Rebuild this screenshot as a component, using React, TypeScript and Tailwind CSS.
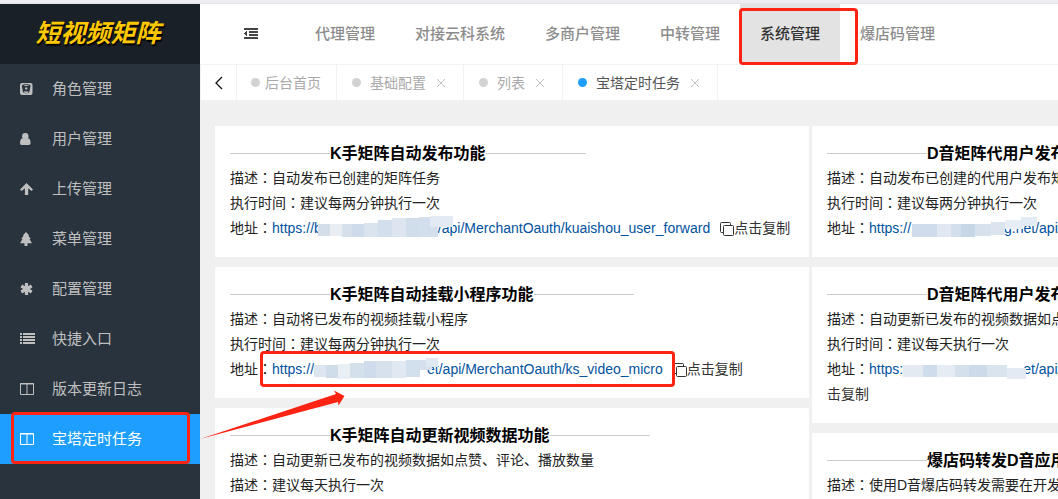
import type { ReactNode } from "react"

interface Patch {
  x: number
  y: number
  w: number
  h: number
  fill: string
}

interface Task {
  title: string
  rows: [string, string][]
  url?: { start: string; end: string; gap: string; patches: Patch[]; boxed?: boolean }
}

const RED = "border-[#ff2314]"

function BucketIcon() {
  return (
    <svg width="14" height="14" viewBox="0 0 14 14">
      <rect x="0" y="1" width="12.5" height="12" rx="2" fill="currentColor" />
      <path d="M1.800 3.500c1-1.700 7.800-1.700 8.800 0L9.400 10c-.8 1.800-5.600 1.800-6.400 0z" fill="#28333e" />
      <path d="M3.200 3.500c1.500-.8 4.500-.8 6 0-1.500.7-4.500.7-6 0zM4 9c1.200.8 3.200.8 4.400 0l-.3 1.400c-1 .7-2.800.7-3.800 0z" fill="currentColor" />
      <circle cx="6.200" cy="6.400" r="1.200" fill="currentColor" />
    </svg>
  )
}

function UserIcon() {
  return (
    <svg width="14" height="14" viewBox="0 0 14 14" fill="currentColor">
      <circle cx="5.300" cy="4.200" r="3.200" />
      <path d="M0 11c0-3 1-4.600 3-4.700 1.300 1.200 3.300 1.200 4.600 0 2 .1 3 1.700 3 4.700 0 1.300-.7 2-1.700 2H1.700C.7 13 0 12.300 0 11z" />
    </svg>
  )
}

function ArrowUpIcon() {
  return (
    <svg width="14" height="14" viewBox="0 0 14 14" fill="currentColor">
      <path d="M6.500 1 13 7.400l-1.500 1.500L8.200 6.200V13H4.900V6.200L1.600 8.900 0 7.400z" />
    </svg>
  )
}

function TreeIcon() {
  return (
    <svg width="14" height="14" viewBox="0 0 14 14" fill="currentColor">
      <path d="M6 0l3.300 3.600H8.200l2.600 3.300H9.500L12 11.300H7.500V14h-3v-2.700H0l2.500-4.400H1.200l2.600-3.300H2.700z" />
    </svg>
  )
}

function AsteriskIcon() {
  return (
    <svg width="14" height="14" viewBox="0 0 14 14" fill="none" stroke="currentColor" strokeWidth="3.200">
      <path d="M6.500 1v12M1.300 4l10.400 6M11.700 4 1.300 10" />
    </svg>
  )
}

function ListIcon() {
  return (
    <svg width="15" height="14" viewBox="0 0 15 14" fill="currentColor" shapeRendering="crispEdges">
      <path d="M0 1h2v2H0zM3 1h12v2H3zM0 4h2v2H0zM3 4h12v2H3zM0 7h2v2H0zM3 7h12v2H3zM0 10h2v2H0zM3 10h12v2H3z" />
    </svg>
  )
}

function ColumnsIcon() {
  return (
    <svg width="14" height="14" viewBox="0 0 14 14" fill="none" stroke="currentColor">
      <path d="M.5 1.500h13v11H.5zM7 2v11M0 2h14" />
    </svg>
  )
}

function OutdentIcon() {
  return (
    <svg width="14" height="12" viewBox="0 0 14 12" fill="#444" shapeRendering="crispEdges">
      <path d="M0 0h14v2H0zM5 3h9v2H5zM5 6h9v2H5zM0 9h14v2H0zM0 5.500l3-3v6z" />
    </svg>
  )
}

function CopyIcon() {
  return (
    <svg className="inline-block align-text-bottom" width="14" height="14" viewBox="0 0 14 14" fill="none" stroke="currentColor">
      <path d="M3 10.500H1.500a1 1 0 0 1-1-1v-8a1 1 0 0 1 1-1h8a1 1 0 0 1 1 1V3" />
      <rect x="3.500" y="3.500" width="10" height="10" rx="1" />
    </svg>
  )
}

const menu: { label: string; icon: ReactNode; active?: boolean }[] = [
  { label: "角色管理", icon: <BucketIcon /> },
  { label: "用户管理", icon: <UserIcon /> },
  { label: "上传管理", icon: <ArrowUpIcon /> },
  { label: "菜单管理", icon: <TreeIcon /> },
  { label: "配置管理", icon: <AsteriskIcon /> },
  { label: "快捷入口", icon: <ListIcon /> },
  { label: "版本更新日志", icon: <ColumnsIcon /> },
  { label: "宝塔定时任务", icon: <ColumnsIcon />, active: true },
]

const nav = ["代理管理", "对接云科系统", "多商户管理", "中转管理", "系统管理", "爆店码管理"]

const tabs = ["基础配置", "列表", "宝塔定时任务"]

const leftTasks: Task[] = [
  {
    title: "K手矩阵自动发布功能",
    rows: [["描述", "自动发布已创建的矩阵任务"], ["执行时间", "建议每两分钟执行一次"]],
    url: {
      start: "https://b",
      end: "/api/MerchantOauth/kuaishou_user_forward",
      gap: "w-[116px]",
      patches: [
        { x: -4, y: 8, w: 24, h: 12, fill: "#d3deea" },
        { x: 8, y: 8, w: 12, h: 12, fill: "#e9edf3" },
        { x: 20, y: 8, w: 22, h: 13, fill: "#d5e0ec" },
        { x: 30, y: 8, w: 12, h: 13, fill: "#cddbea" },
        { x: 42, y: 7, w: 14, h: 14, fill: "#dae4ef" },
        { x: 56, y: 4, w: 14, h: 17, fill: "#d3dfed" },
        { x: 70, y: 2, w: 20, h: 19, fill: "#dde6f0" },
        { x: 84, y: 2, w: 13, h: 19, fill: "#d0ddeb" },
        { x: 97, y: 1, w: 19, h: 20, fill: "#d3dfec" },
        { x: 108, y: 0, w: 23, h: 11, fill: "#e3eaf3" },
      ],
    },
  },
  {
    title: "K手矩阵自动挂载小程序功能",
    rows: [["描述", "自动将已发布的视频挂载小程序"], ["执行时间", "建议每两分钟执行一次"]],
    url: {
      start: "https://",
      end: "et/api/MerchantOauth/ks_video_micro",
      gap: "w-[113px]",
      boxed: true,
      patches: [
        { x: 0, y: 8, w: 12, h: 12, fill: "#dde6f0" },
        { x: 12, y: 8, w: 12, h: 13, fill: "#cfdcea" },
        { x: 24, y: 7, w: 12, h: 15, fill: "#e9eff5" },
        { x: 36, y: 6, w: 14, h: 15, fill: "#d5e0ed" },
        { x: 50, y: 4, w: 12, h: 17, fill: "#cfdceb" },
        { x: 62, y: 4, w: 16, h: 17, fill: "#d6e1ed" },
        { x: 78, y: 4, w: 14, h: 17, fill: "#e0e9f2" },
        { x: 92, y: 3, w: 14, h: 17, fill: "#d2dfec" },
        { x: 106, y: 3, w: 12, h: 10, fill: "#d5e0ec" },
        { x: 112, y: 1, w: 12, h: 9, fill: "#e0e8f1" },
      ],
    },
  },
  {
    title: "K手矩阵自动更新视频数据功能",
    rows: [["描述", "自动更新已发布的视频数据如点赞、评论、播放数量"], ["描述", "建议每天执行一次"]],
  },
]

const rightTasks: Task[] = [
  {
    title: "D音矩阵代用户发布功能",
    rows: [["描述", "自动发布已创建的代用户发布矩阵任务"], ["执行时间", "建议每两分钟执行一次"]],
    url: {
      start: "https://",
      end: "g.net/api/MerchantOauth/user_forward",
      gap: "w-[93px]",
      patches: [
        { x: 1, y: 8, w: 26, h: 13, fill: "#cfdceb" },
        { x: 26, y: 8, w: 14, h: 13, fill: "#e1e8f1" },
        { x: 40, y: 8, w: 12, h: 13, fill: "#d3dfec" },
        { x: 50, y: 8, w: 14, h: 13, fill: "#c8d7e8" },
        { x: 64, y: 8, w: 16, h: 12, fill: "#d6e1ed" },
        { x: 80, y: 6, w: 14, h: 13, fill: "#dce5ef" },
        { x: 94, y: 4, w: 18, h: 9, fill: "#e6edf4" },
        { x: 110, y: 1, w: 16, h: 9, fill: "#e3ebf4" },
      ],
    },
  },
  {
    title: "D音矩阵代用户发布数据更新功能",
    rows: [["描述", "自动更新已发布的视频数据如点赞、评论、播放数量"], ["执行时间", "建议每天执行一次"]],
    url: {
      start: "https:",
      end: "et/api/MerchantOauth/douyin_user_sync_video_info",
      gap: "w-[120px]",
      patches: [
        { x: 0, y: 8, w: 20, h: 12, fill: "#e3eaf2" },
        { x: 20, y: 8, w: 14, h: 12, fill: "#cfdceb" },
        { x: 34, y: 8, w: 18, h: 12, fill: "#e6ecf3" },
        { x: 52, y: 8, w: 20, h: 12, fill: "#d5e0ed" },
        { x: 66, y: 8, w: 18, h: 12, fill: "#cddaea" },
        { x: 84, y: 8, w: 20, h: 12, fill: "#dae4ee" },
        { x: 104, y: 11, w: 19, h: 11, fill: "#e3eaf3" },
      ],
    },
  },
  {
    title: "爆店码转发D音应用功能",
    rows: [["描述", "使用D音爆店码转发需要在开发平台配置"], ["执行时间", "建议每天执行一次"]],
  },
]

function Label({ children }: { children: string }) {
  return (
    <span>
      {children}
      <span className="font-['Noto_Sans_CJK_JP',sans-serif] leading-none">：</span>
    </span>
  )
}

function TaskCard({ task }: { task: Task }) {
  const { url } = task
  return (
    <section className="bg-white px-[15px] pt-[15px] pb-4 text-sm leading-[25px] text-[#222]">
      <h2 className="flex items-center text-base leading-[25px] font-bold whitespace-nowrap text-black">
        <span className="h-px w-[100px] bg-[#ccc]" />
        {task.title}
        <span className="h-px w-[100px] bg-[#ccc]" />
      </h2>
      {task.rows.map(([label, text]) => (
        <p key={text}>
          <Label>{label}</Label>
          {text}
        </p>
      ))}
      {url && (
        <p>
          <Label>地址</Label>
          <a href="#task" className="relative text-[#01529f]">
            {url.start}
            <span className={`relative inline-block h-[25px] align-top ${url.gap}`}>
              <svg className="absolute top-0 left-0 overflow-visible" width="100%" height="25" shapeRendering="crispEdges">
                {url.patches.map((p) => (
                  <rect key={p.x} x={p.x} y={p.y} width={p.w} height={p.h} fill={p.fill} />
                ))}
              </svg>
            </span>
            {url.end}
            {url.boxed && <span className={`absolute -inset-x-3 -inset-y-[10px] z-10 rounded-sm border-3 ${RED}`} />}
          </a>
          <a href="#copy" className="ml-[10px] text-[#333]">
            <CopyIcon />
            点击复制
          </a>
        </p>
      )}
    </section>
  )
}

function Sidebar() {
  return (
    <aside className="w-[200px] shrink-0 bg-[#28333e]">
      <div className="flex h-[60px] items-center justify-center bg-[#1a2027] pr-1 text-[25px] font-bold text-[#ffc800] italic [text-shadow:1px_2px_1px_#000]">
        短视频矩阵
      </div>
      <ul>
        {menu.map((item) => (
          <li key={item.label} className="relative">
            <a
              href="#menu"
              className={`flex h-[50px] items-center pl-5 text-[15px] ${item.active ? "bg-[#1e9fff] text-white" : "text-[#bfbfbf]"}`}
            >
              <span className="w-8">{item.icon}</span>
              {item.label}
            </a>
            {item.active && (
              <>
                <span className={`absolute -top-0.5 right-[10px] bottom-0 left-[11px] rounded-sm border-3 ${RED}`} />
                <svg className="absolute -top-6 left-full z-10" width="146" height="50" viewBox="0 0 146 50">
                  <path d="M0 49 136 4l-2-3.500 10.500 5.500-6 9.500-.5-3.500z" fill="#ff2314" />
                </svg>
              </>
            )}
          </li>
        ))}
      </ul>
    </aside>
  )
}

function Header() {
  return (
    <header className="flex h-[61px] border-b border-[#f2f2f2] bg-white">
      <button type="button" aria-label="收起菜单" className="mr-[37px] ml-11 flex h-[60px] items-center">
        <OutdentIcon />
      </button>
      <nav className="flex h-[60px] text-[15px] font-medium whitespace-nowrap">
        {nav.map((label) => {
          const active = label === "系统管理"
          return (
            <a
              key={label}
              href="#nav"
              className={`relative flex items-center px-5 ${active ? "bg-[#e3e3e3] text-[#333]" : "text-[#8c8c8c]"}`}
            >
              {label}
              {active && <span className={`absolute top-1 -right-[18px] -bottom-px -left-px z-10 rounded-sm border-3 ${RED}`} />}
            </a>
          )
        })}
      </nav>
    </header>
  )
}

function TabBar() {
  return (
    <div className="flex h-[35px] border-l border-[#f2f2f2] bg-white text-sm whitespace-nowrap text-[#aaa]">
      <button type="button" aria-label="向左" className="flex w-9 items-center justify-center border-r border-[#f2f2f2] text-[#111]">
        <svg width="8" height="14" viewBox="0 0 8 14" fill="none" stroke="currentColor" strokeWidth="1.300">
          <path d="M7 1 1 7l6 6" />
        </svg>
      </button>
      <button type="button" className="flex items-center border-r border-[#f2f2f2] pr-[15px] pl-[14px]">
        <span className="mr-[5px] size-[9px] rounded-full bg-[#d2d2d2]" />
        后台首页
      </button>
      {tabs.map((label) => {
        const active = label === "宝塔定时任务"
        return (
          <button
            key={label}
            type="button"
            className={`flex items-center border-r border-[#f2f2f2] pr-[17px] pl-[15px] ${active ? "text-[#555]" : ""}`}
          >
            <span className={`mr-[9px] size-[9px] rounded-full ${active ? "bg-[#1e9fff]" : "bg-[#d2d2d2]"}`} />
            {label}
            <svg className="ml-[10px]" width="10" height="10" viewBox="0 0 10 10" stroke="#c2c2c2">
              <path d="m1 1 8 8M9 1 1 9" />
            </svg>
          </button>
        )
      })}
    </div>
  )
}

export default function App() {
  return (
    <div className="flex h-screen flex-col overflow-hidden bg-[#f0f0f0] font-['Liberation_Sans','Noto_Sans_CJK_SC',sans-serif]">
      <div className="h-1 shrink-0 border-b border-[#e2e2e6] bg-[#eeeef4]" />
      <div className="flex min-h-0 flex-1">
        <Sidebar />
        <div className="min-w-0 flex-1 overflow-hidden">
          <Header />
          <TabBar />
          <main className="flex gap-[3px] px-[15px] pt-[26px]">
            {[leftTasks, rightTasks].map((column, index) => (
              <div key={index} className="flex min-w-[594px] flex-1 flex-col gap-[10px]">
                {column.map((task) => (
                  <TaskCard key={task.title} task={task} />
                ))}
              </div>
            ))}
          </main>
        </div>
      </div>
    </div>
  )
}
